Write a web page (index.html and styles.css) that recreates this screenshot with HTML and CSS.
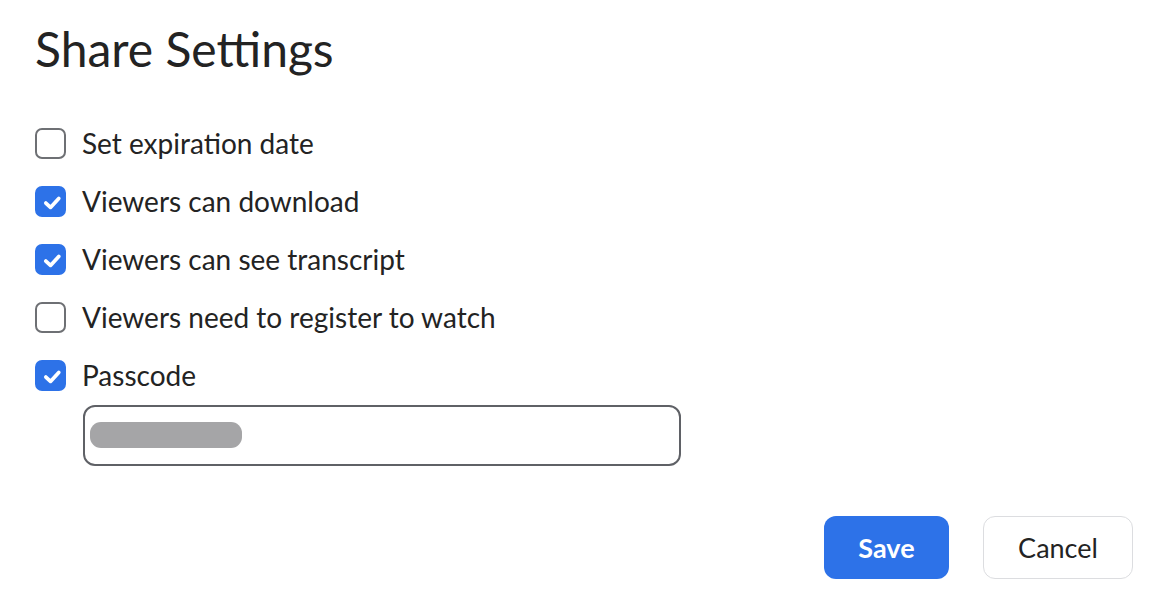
FILE: index.html
```html
<!DOCTYPE html>
<html lang="en">
<head>
<meta charset="utf-8">
<title>Share Settings</title>
<link rel="stylesheet" href="styles.css">
</head>
<body>
<div class="dialog">
  <h1 class="title">Share Settings</h1>
  <div class="options">
    <label class="row"><span class="box"></span><span class="label">Set expiration date</span></label>
    <label class="row"><span class="box checked"><svg viewBox="0 0 30 30" class="tick"><path d="M10.5 16.5l4.5 4.2 8-8.7" /></svg></span><span class="label">Viewers can download</span></label>
    <label class="row"><span class="box checked"><svg viewBox="0 0 30 30" class="tick"><path d="M10.5 16.5l4.5 4.2 8-8.7" /></svg></span><span class="label">Viewers can see transcript</span></label>
    <label class="row"><span class="box"></span><span class="label">Viewers need to register to watch</span></label>
    <label class="row"><span class="box checked"><svg viewBox="0 0 30 30" class="tick"><path d="M10.5 16.5l4.5 4.2 8-8.7" /></svg></span><span class="label">Passcode</span></label>
    <div class="input"><span class="redact"></span></div>
  </div>
  <div class="actions">
    <button class="btn primary">Save</button>
    <button class="btn secondary">Cancel</button>
  </div>
</div>
</body>
</html>
```
FILE: styles.css
```css
html, body {
  margin: 0;
  padding: 0;
  background: #ffffff;
}
body {
  font-family: Lato, "Open Sans", "Liberation Sans", sans-serif;
  color: #232323;
}
.dialog {
  width: 1160px;
  height: 594px;
  box-sizing: border-box;
  padding: 20px 27px 0 35px;
}
.title {
  margin: 0;
  font-size: 48px;
  font-weight: 400;
  line-height: 1.2;
  letter-spacing: 0;
}
.options {
  margin-top: 37px;
  display: flex;
  flex-direction: column;
}
.row {
  height: 58px;
  display: flex;
  align-items: center;
  gap: 16px;
}
.box {
  width: 31px;
  height: 31px;
  box-sizing: border-box;
  border: 2px solid #6e7074;
  border-radius: 7px;
  display: flex;
  align-items: center;
  justify-content: center;
  flex: none;
}
.box.checked {
  background: #2d72e8;
  border-color: #2d72e8;
}
.tick {
  width: 31px;
  height: 31px;
  flex: none;
  fill: none;
  stroke: #ffffff;
  stroke-width: 3.6;
  stroke-linecap: round;
  stroke-linejoin: round;
}
.label {
  font-size: 28px;
  line-height: 1.2;
}
.input {
  margin-left: 48px;
  width: 598px;
  height: 61px;
  box-sizing: border-box;
  border: 2px solid #5f6166;
  border-radius: 12px;
  display: flex;
  align-items: center;
  padding-left: 5px;
}
.redact {
  display: block;
  width: 152px;
  height: 26px;
  border-radius: 11px;
  background: #a5a5a7;
}
.actions {
  margin-top: 50px;
  display: flex;
  justify-content: flex-end;
  gap: 34px;
}
.btn {
  font-family: Lato, "Open Sans", "Liberation Sans", sans-serif;
  font-size: 27px;
  border-radius: 12px;
  box-sizing: border-box;
  cursor: pointer;
}
.primary {
  width: 125px;
  height: 63px;
  background: #2d72e8;
  color: #ffffff;
  border: none;
  font-weight: 700;
}
.secondary {
  width: 150px;
  height: 63px;
  background: #ffffff;
  color: #232323;
  border: 1.5px solid #dcdde0;
  font-weight: 400;
}
```
